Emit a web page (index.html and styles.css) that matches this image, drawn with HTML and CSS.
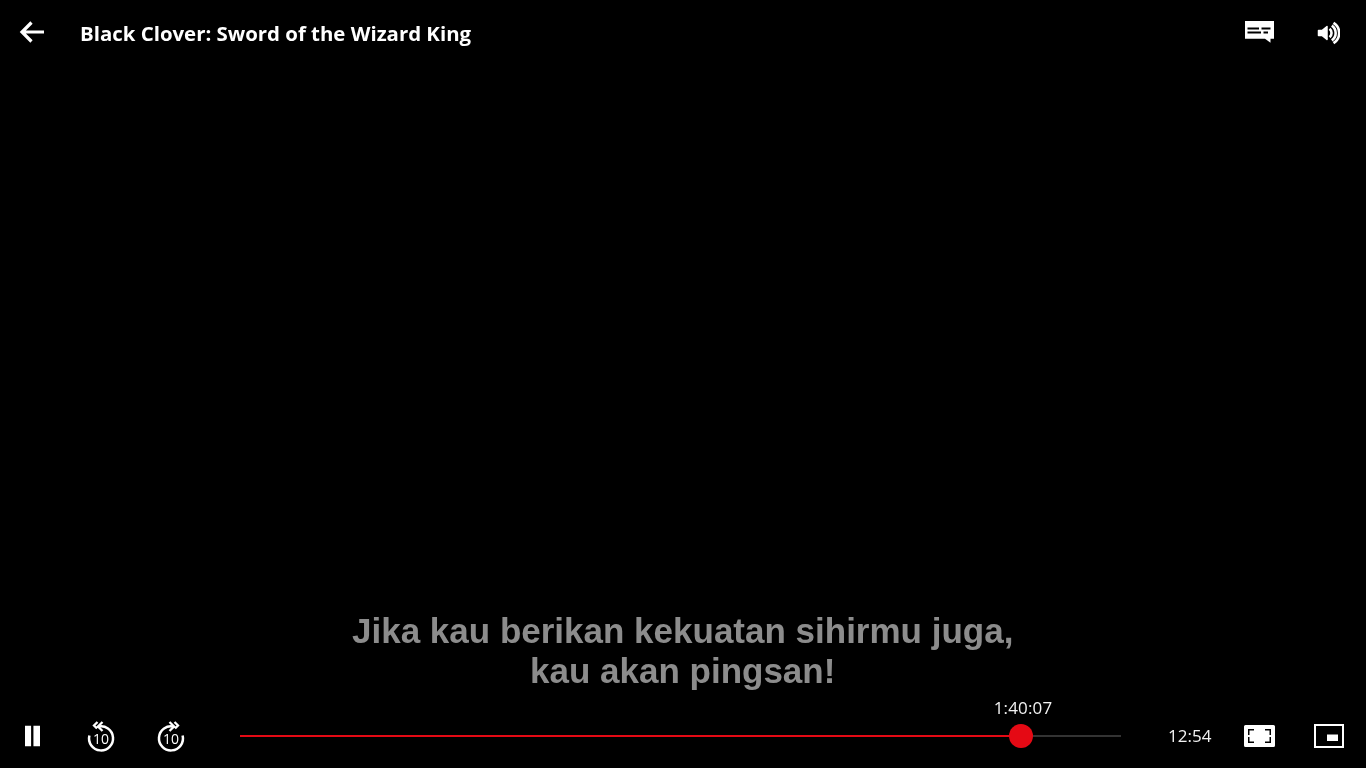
FILE: index.html
```html
<!DOCTYPE html>
<html lang="id">
<head>
<meta charset="utf-8">
<title>Black Clover: Sword of the Wizard King</title>
<link rel="stylesheet" href="styles.css">
</head>
<body>
<div class="player">
  <header class="topbar">
    <svg class="icon-back" viewBox="0 0 26 24" aria-hidden="true"><path d="M26 11H4M13.500 1.500 4 11l9.500 9.500" fill="none" stroke="#fff" stroke-width="3.200"/></svg>
    <h1 class="title">Black Clover: Sword of the Wizard King</h1>
    <div class="top-actions">
      <svg class="icon-cc" viewBox="0 0 30 24" aria-hidden="true"><path fill="#fff" fill-rule="evenodd" d="M0 0h29v17.700h-3.500v4L20 17.700H0ZM2.500 6.500v2h11.500v-2Zm14 0v2h9v-2ZM2.500 10.500v2H16v-2Zm16 0v2h4.500v-2Z"/></svg>
      <svg class="icon-vol" viewBox="0 -1 24 26" aria-hidden="true"><path fill="#fff" stroke="#fff" stroke-width="1.500" stroke-linejoin="round" d="M2.500 9.500H6L11 5.500v13l-5-4H2.500Z"/><path d="M13.600 7.800a5.500 5.500 0 0 1 0 8.400M15.800 4.600a9 9 0 0 1 0 14.800M17.500 1.800a12 12 0 0 1 0 20.400" fill="none" stroke="#fff" stroke-width="2.600"/></svg>
    </div>
  </header>
  <main class="stage">
    <p class="subtitle">Jika kau berikan kekuatan sihirmu juga,<br>kau akan pingsan!</p>
  </main>
  <footer class="controls">
    <svg class="icon-pause" viewBox="0 0 16 22" aria-hidden="true"><path fill="#fff" d="M0 0h6.500v22H0ZM9 0h7v22H9Z"/></svg>
    <div class="skip">
      <svg viewBox="0 0 32 34" aria-hidden="true"><path d="M13 7.800A12 12 0 1 1 4.400 16.500" fill="none" stroke="#fff" stroke-width="2.500"/><path d="M17.500 3l-4.500 4.500 4.500 4.500M12.500 3 9 6.500l3 3" fill="none" stroke="#fff" stroke-width="2.300"/></svg>
      <span class="skip-num">10</span>
    </div>
    <div class="skip">
      <svg viewBox="0 0 32 34" aria-hidden="true"><path d="M19 7.800A12 12 0 1 0 27.600 16.500" fill="none" stroke="#fff" stroke-width="2.500"/><path d="M14.500 3l4.500 4.500-4.500 4.500M19.500 3 23 6.500l-3 3" fill="none" stroke="#fff" stroke-width="2.300"/></svg>
      <span class="skip-num">10</span>
    </div>
    <div class="rail">
      <div class="rail-fill"></div>
      <div class="thumb"><span class="thumb-time">1:40:07</span></div>
    </div>
    <span class="remaining">12:54</span>
    <svg class="icon-full" viewBox="0 0 31 22" aria-hidden="true"><path fill="#fff" fill-rule="evenodd" d="M1.500 0h28A1.500 1.500 0 0 1 31 1.500v19a1.500 1.500 0 0 1-1.500 1.500h-28A1.500 1.500 0 0 1 0 20.500v-19A1.500 1.500 0 0 1 1.500 0ZM4 4v6h1.500V5.500H10V4Zm17 0v1.500h4.500V10H27V4ZM4 12v6h6v-1.500H5.500V12Zm21.500 0v4.500H21V18h6v-6Z"/></svg>
    <svg class="icon-pip" viewBox="0 0 30 24" aria-hidden="true"><path fill="none" stroke="#fff" stroke-width="2" d="M1 1h28v22H1Z"/><path fill="#fff" d="M13 10.500h11V17H13Z"/></svg>
  </footer>
</div>
</body>
</html>
```
FILE: styles.css
```css
* { box-sizing: border-box; }
html, body { margin: 0; height: 100%; background: #000; }
.player {
  display: flex;
  flex-direction: column;
  height: 768px;
  overflow: hidden;
  background: #000;
  color: #fff;
}
.topbar {
  display: flex;
  align-items: center;
  height: 66px;
  padding: 0 26px 0 18px;
  flex: none;
}
.icon-back { width: 26px; height: 24px; flex: none; }
.title {
  margin: 0 0 0 36px;
  font: 700 20.4px/28px "Open Sans", "Noto Sans", sans-serif;
  white-space: nowrap;
  will-change: transform;
}
.top-actions {
  margin-left: auto;
  display: flex;
  align-items: center;
  gap: 42px;
}
.icon-cc { width: 30px; height: 24px; transform: translateX(1px); }
.icon-vol { width: 24px; height: 26px; }
.stage {
  flex: 1;
  display: flex;
  flex-direction: column;
  justify-content: flex-end;
  align-items: center;
}
.subtitle {
  margin: 0 0 13px;
  text-align: center;
  font: 700 35px/40px "Liberation Sans", Arial, sans-serif;
  color: #8c8c8c;
  will-change: transform;
}
.controls {
  flex: none;
  height: 64px;
  display: flex;
  align-items: center;
  padding: 0 22px 0 25px;
  position: relative;
}
.icon-pause { width: 15px; height: 22px; flex: none; }
.skip {
  position: relative;
  width: 32px;
  height: 34px;
  flex: none;
  margin-left: 38px;
}
.icon-pause + .skip { margin-left: 45px; }
.skip svg { display: block; width: 32px; height: 34px; }
.skip-num {
  position: absolute;
  left: 0;
  right: 0;
  top: 12px;
  text-align: center;
  font: 500 14px/16px "Open Sans", sans-serif;
  will-change: transform;
}
.rail {
  position: relative;
  flex: none;
  width: 881px;
  height: 2px;
  margin-left: 53px;
  background: #333;
}
.rail-fill { width: 781px; height: 2px; background: #e50914; }
.thumb {
  position: absolute;
  left: 769px;
  top: -11px;
  width: 24px;
  height: 24px;
  border-radius: 50%;
  background: #e50914;
}
.thumb-time {
  position: absolute;
  left: 14px;
  bottom: 30px;
  transform: translateX(-50%);
  font: 400 17px/20px "Open Sans", sans-serif;
  letter-spacing: 0.15px;
  color: #f2f2f2;
  white-space: nowrap;
  will-change: transform;
}
.remaining {
  margin-left: 47px;
  width: 44px;
  flex: none;
  font: 400 17px/20px "Open Sans", sans-serif;
  color: #f2f2f2;
  white-space: nowrap;
  will-change: transform;
}
.icon-full { width: 31px; height: 22px; flex: none; margin-left: 32px; }
.icon-pip { width: 30px; height: 24px; flex: none; margin-left: 39px; }
```
